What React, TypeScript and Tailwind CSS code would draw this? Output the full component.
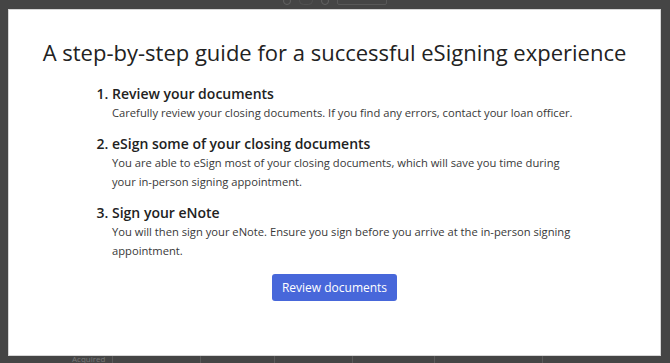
const steps = [
  {
    title: "Review your documents",
    body: "Carefully review your closing documents. If you find any errors, contact your loan officer.",
  },
  {
    title: "eSign some of your closing documents",
    body: "You are able to eSign most of your closing documents, which will save you time during your in-person signing appointment.",
  },
  {
    title: "Sign your eNote",
    body: "You will then sign your eNote. Ensure you sign before you arrive at the in-person signing appointment.",
  },
];

export default function App() {
  return (
    <div
      className="relative h-[363px] w-[670px] overflow-hidden bg-[#454545]"
      style={{ fontFamily: '"Open Sans", "Liberation Sans", sans-serif' }}
    >
      {/* faint page behind the overlay */}
      <div className="absolute left-[283px] top-[-4px] flex items-center gap-[8px] opacity-60">
        <div className="h-[8px] w-[8px] rounded-full border border-[#777]" />
        <div className="h-[9px] w-[14px] rounded-full border border-[#5a5a5a]" />
        <div className="h-[8px] w-[8px] rounded-full border border-[#777]" />
        <div className="h-[9px] w-[50px] rounded-[2px] border border-[#666]" />
      </div>
      <div className="absolute bottom-0 left-0 flex h-[8px] w-full text-[8px] leading-[8px] text-[#777]">
        <div className="w-[112px] pl-[72px]">Acquired</div>
        <div className="w-[88px] border-l border-[#5a5a5a]" />
        <div className="w-[74px] border-l border-[#5a5a5a]" />
        <div className="w-[78px] border-l border-[#5a5a5a]" />
        <div className="w-[82px] border-l border-[#5a5a5a]" />
        <div className="w-[108px] border-l border-[#5a5a5a]" />
        <div className="flex-1 border-l border-[#5a5a5a]" />
      </div>

      <div className="absolute left-[8px] top-[9px] flex h-[347px] w-[653px] flex-col items-center border border-[#d6d6d6] bg-white pt-[27px]">
        <h1 className="text-[22px] font-medium leading-[30px] text-[#222]">
          A step-by-step guide for a successful eSigning experience
        </h1>

        <ol className="mt-[16px] w-full list-decimal pl-[103px] pr-[40px] marker:font-semibold marker:text-[#222]">
          {steps.map((s, i) => (
            <li key={i} className={`text-[14px] ${i > 0 ? "mt-[11px]" : ""}`}>
              <div className="text-[14px] font-semibold leading-[18px] text-[#222]">{s.title}</div>
              <p className="max-w-[472px] text-[11.2px] leading-[19px] text-[#383838]">{s.body}</p>
            </li>
          ))}
        </ol>

        <button className="mt-[14px] h-[27px] rounded-[3px] bg-[#4767da] px-[10px] text-[12px] font-medium text-white">
          Review documents
        </button>
      </div>
    </div>
  );
}
